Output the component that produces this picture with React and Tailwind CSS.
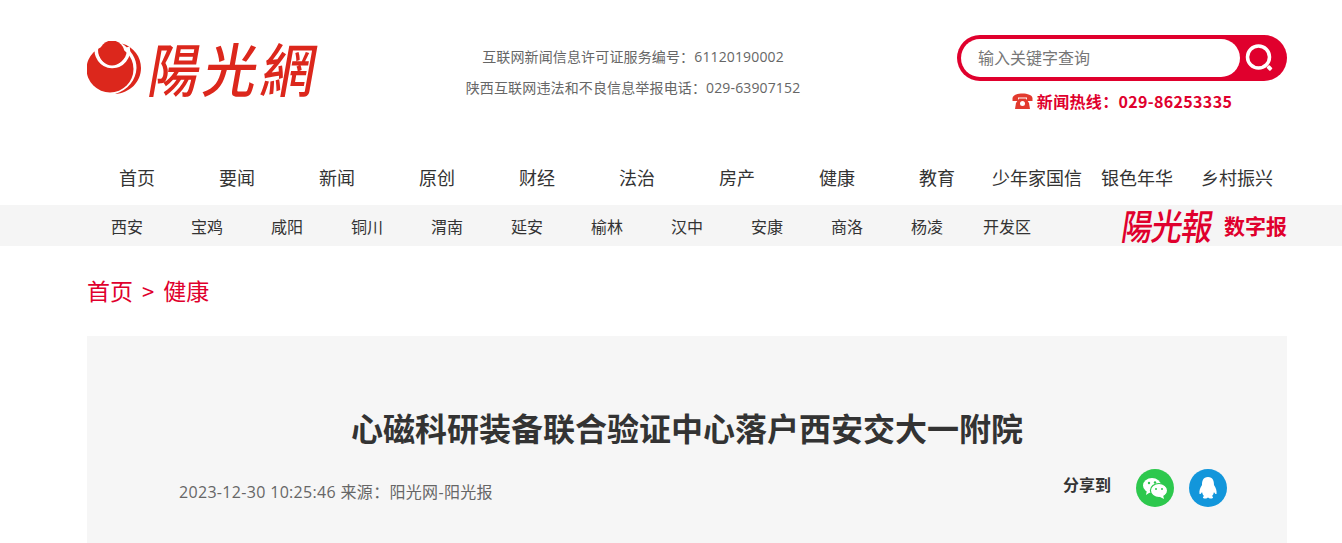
import React from "react";

const font = { fontFamily: '"Noto Sans CJK SC", sans-serif' };
const latin = { fontFamily: '"Open Sans", "Noto Sans CJK SC", sans-serif' };
const nav = ["首页","要闻","新闻","原创","财经","法治","房产","健康","教育","少年家国信","银色年华","乡村振兴"];
const sub = ["西安","宝鸡","咸阳","铜川","渭南","延安","榆林","汉中","安康","商洛","杨凌","开发区"];

function Sun() {
  return (
    <svg width="56" height="56" viewBox="0 0 56 56" className="shrink-0">
      <circle cx="23" cy="28" r="23.500" fill="#dc271c" />
      <path d="M35 2.500 C47 6 54 16 54 27 C54 41 43 52 28 53 C41 49 49 39 49.500 27 C49.800 18 44 9 35 2.500Z" fill="#dc271c" />
      <path d="M10 5 A16 16 0 1 0 41 6" fill="none" stroke="#fff" strokeWidth="3.500" />
      <circle cx="25" cy="12" r="12.500" fill="#dc271c" />
    </svg>
  );
}

export default function App() {
  return (
    <div className="h-[543px] overflow-hidden bg-white" style={font}>
      <div className="ml-[87px] w-[1200px] h-[150px] flex items-start">
        <div className="w-[240px] h-[70px] mt-[34px] flex items-center">
          <Sun />
          <div className="ml-[4px] -mt-[4px] flex text-[#dc271c] text-[58px] leading-[64px] font-medium -skew-x-[10deg]">
            <span className="w-[56px] text-center scale-x-[0.88]">陽</span>
            <span className="w-[58px] text-center scale-x-[0.92]">光</span>
            <span className="w-[58px] text-center scale-x-[0.92]">網</span>
          </div>
        </div>
        <div className="w-[460px] ml-[76px] mt-[41px] text-center text-[14px] leading-[31px] text-[#666] tracking-[0.14px]" style={latin}>
          <p>互联网新闻信息许可证服务编号：61120190002</p>
          <p>陕西互联网违法和不良信息举报电话：029-63907152</p>
        </div>
        <div className="ml-[94px] w-[330px] mt-[35px]">
          <div className="h-[46px] rounded-full bg-[#e0002d] flex items-stretch p-[4px] pr-0">
            <div className="w-[279px] rounded-full bg-white flex items-center pl-[17px] pb-[2px] text-[16px] text-[#777]">输入关键字查询</div>
            <div className="flex-1 flex items-center pl-[4px]">
              <svg width="32" height="32" viewBox="0 0 32 32">
                <circle cx="14.500" cy="15" r="11" fill="none" stroke="#fff" strokeWidth="3.500" />
                <rect x="23" y="24" width="5" height="4" rx="1" fill="#fff" transform="rotate(45 25.500 26)" />
              </svg>
            </div>
          </div>
          <div className="mt-[9px] flex items-center justify-center text-[16px] leading-[22px] font-bold text-[#e0002d] tracking-[0.33px]">
            <svg width="21" height="18" viewBox="0 0 21 18" className="mr-[4px] shrink-0">
              <path d="M0.500 6 C1 0 20 0 20.500 6 L20.500 9 L15 9 L15 5.500 L6 5.500 L6 9 L0.500 9Z" fill="#e23a2e" />
              <path d="M3 17 L4 11 L7 6.500 L14 6.500 L17 11 L18 17Z" fill="#e23a2e" />
              <circle cx="10.500" cy="11.500" r="2.500" fill="#fff" />
            </svg>
            新闻热线：029-86253335
          </div>
        </div>
      </div>
      <div className="ml-[87px] flex h-[55px] items-center">
        {nav.map((n) => (
          <div key={n} className="w-[100px] shrink-0 text-center text-[18px] whitespace-nowrap text-[#333]">{n}</div>
        ))}
      </div>
      <div className="h-[41px] bg-[#f5f5f5]">
        <div className="ml-[87px] w-[1200px] h-full flex items-center">
          <div className="flex w-[960px]">
            {sub.map((n) => (
              <div key={n} className="w-[80px] text-center text-[16px] text-[#333]">{n}</div>
            ))}
          </div>
          <div className="flex-1 flex items-center justify-end">
            <div className="text-[#e0002d] text-[36px] leading-[40px] font-medium -skew-x-[10deg] scale-x-[0.86] tracking-[-1px] -mt-[3px] mr-[4px] whitespace-nowrap">陽光報</div>
            <div className="text-[#e0002d] text-[21px] font-bold whitespace-nowrap">数字报</div>
          </div>
        </div>
      </div>
      <div className="ml-[87px] w-[1200px]">
        <div className="h-[90px] flex items-center pb-[2px] text-[23px] text-[#e0002d]">
          首页<span className="mx-[9px] text-[22px]">&gt;</span>健康
        </div>
        <div className="h-[300px] bg-[#f6f6f6]">
          <h1 className="pt-[65px] text-center text-[32px] leading-[52px] font-bold text-[#333]">心磁科研装备联合验证中心落户西安交大一附院</h1>
          <div className="mt-[16px] pl-[92px] pr-[60px] flex items-center justify-between">
            <div className="text-[16px] text-[#666] pt-[7px] tracking-[0.32px]" style={latin}>2023-12-30 10:25:46 来源：阳光网-阳光报</div>
            <div className="flex items-center">
              <span className="text-[16px] font-bold text-[#333] mr-[25px] -mt-[8px]">分享到</span>
              <span className="w-[38px] h-[38px] rounded-full bg-[#2dc84d] flex items-center justify-center">
                <svg width="26" height="22" viewBox="0 0 26 22">
                  <ellipse cx="10" cy="8.500" rx="9" ry="7.500" fill="#fff" />
                  <path d="M5 13 L4 18 L10 14Z" fill="#fff" />
                  <ellipse cx="17" cy="13.500" rx="8.600" ry="7" fill="#fff" stroke="#2dc84d" strokeWidth="1.200" />
                  <path d="M21 18 L22 22 L17 19.500Z" fill="#fff" />
                  <circle cx="7" cy="6" r="1.200" fill="#2dc84d" />
                  <circle cx="13" cy="5.500" r="1.200" fill="#2dc84d" />
                  <circle cx="14" cy="12" r="1" fill="#2dc84d" />
                  <circle cx="20" cy="12" r="1" fill="#2dc84d" />
                </svg>
              </span>
              <span className="ml-[15px] w-[38px] h-[38px] rounded-full bg-[#1296db] flex items-center justify-center">
                <svg width="18" height="22" viewBox="1 1 18 22">
                  <path d="M10 1 C5 1 4 5 4 9 C2 12 1 15 1.500 18 C2.500 18.500 3.500 17 4 16 C4.500 18 5 19 6 20 C4.500 21 4.500 22.500 7 22.500 C8.500 22.500 9.500 22 10 21.500 C10.500 22 11.500 22.500 13 22.500 C15.500 22.500 15.500 21 14 20 C15 19 15.500 18 16 16 C16.500 17 17.500 18.500 18.500 18 C19 15 18 12 16 9 C16 5 15 1 10 1Z" fill="#fff" />
                </svg>
              </span>
            </div>
          </div>
        </div>
      </div>
    </div>
  );
}
